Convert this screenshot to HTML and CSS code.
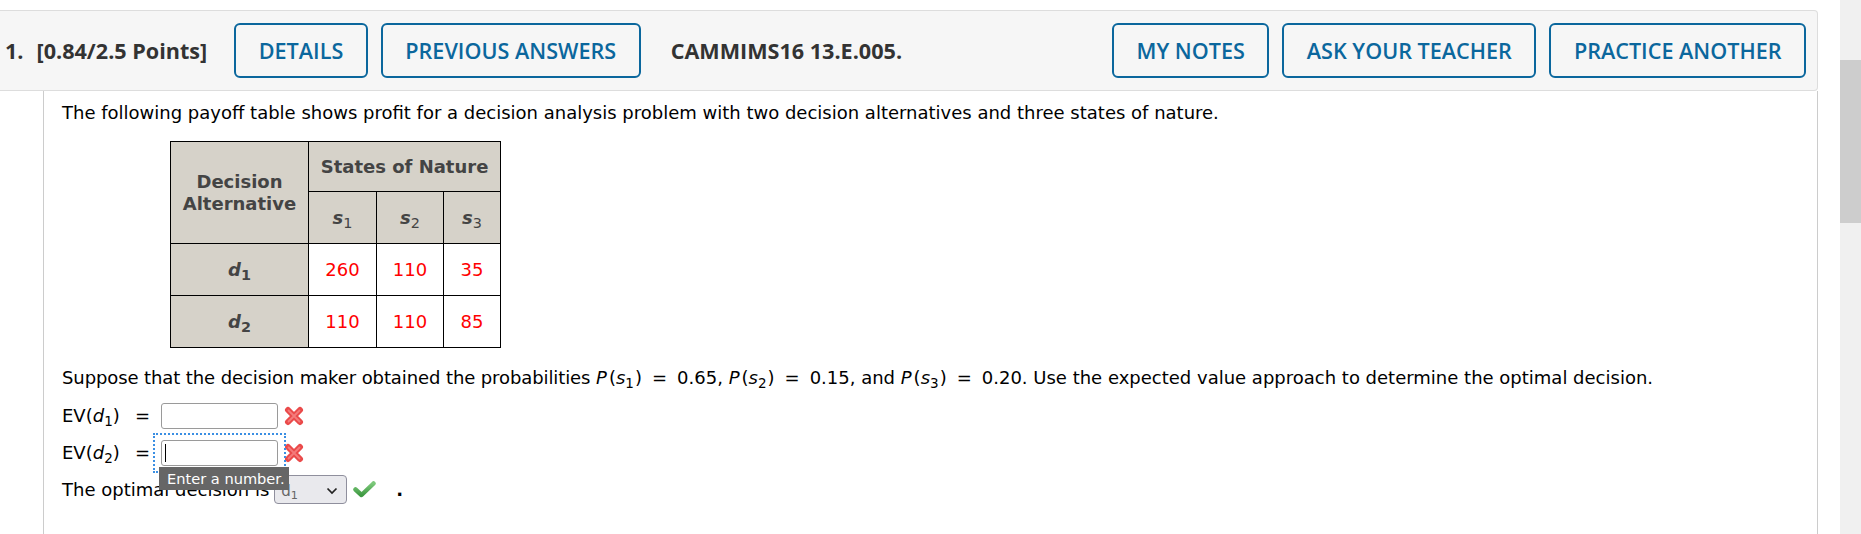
FILE: index.html
```html
<!DOCTYPE html>
<html>
<head>
<meta charset="utf-8">
<link rel="stylesheet" href="styles.css">
</head>
<body>
<div class="app">
  <div class="page">
    <div class="qhead">
      <span class="qnum">1.</span>
      <span class="qpts">[0.84/2.5 Points]</span>
      <button class="btn btn-details">DETAILS</button>
      <button class="btn">PREVIOUS ANSWERS</button>
      <span class="qcode">CAMMIMS16 13.E.005.</span>
      <span class="spacer"></span>
      <button class="btn">MY NOTES</button>
      <button class="btn">ASK YOUR TEACHER</button>
      <button class="btn">PRACTICE ANOTHER</button>
    </div>
    <div class="qbody">
      <p class="intro">The following payoff table shows profit for a decision analysis problem with two decision alternatives and three states of nature.</p>
      <table class="payoff">
        <colgroup>
          <col class="c-alt"><col class="c-s1"><col class="c-s2"><col class="c-s3">
        </colgroup>
        <tr class="r-top">
          <th rowspan="2" class="th-alt">Decision<br>Alternative</th>
          <th colspan="3">States of Nature</th>
        </tr>
        <tr class="r-sub">
          <th><i>s</i><sub>1</sub></th>
          <th><i>s</i><sub>2</sub></th>
          <th><i>s</i><sub>3</sub></th>
        </tr>
        <tr class="r-data">
          <th><i>d</i><sub>1</sub></th>
          <td>260</td><td>110</td><td>35</td>
        </tr>
        <tr class="r-data">
          <th><i>d</i><sub>2</sub></th>
          <td>110</td><td>110</td><td>85</td>
        </tr>
      </table>
      <p class="suppose"><span class="lead">Suppose that the decision maker obtained the probabilities</span> <span class="math"><i class="mp">P</i>(<i>s</i><sub>1</sub>)<span class="meq">=</span>0.65,</span> <span class="math"><i class="mp">P</i>(<i>s</i><sub>2</sub>)<span class="meq">=</span>0.15,</span> and <span class="math"><i class="mp">P</i>(<i>s</i><sub>3</sub>)<span class="meq">=</span>0.20.</span> Use the expected value approach to determine the optimal decision.</p>
      <div class="ev-row">
        <span class="ev-label">EV(<i>d</i><sub>1</sub>)</span>
        <span class="eq">=</span>
        <span class="ans"><span class="inp"></span></span>
        <svg class="xmark" width="20" height="20" viewBox="0 0 20 20"><path d="M4 4 L16 16 M16 4 L4 16" stroke="#ea4a4a" stroke-width="6" stroke-linecap="round"/><path d="M4.5 4.5 L15.5 15.5 M15.5 4.5 L4.5 15.5" stroke="#f47b7b" stroke-width="1.8" stroke-linecap="round"/></svg>
      </div>
      <div class="ev-row">
        <span class="ev-label">EV(<i>d</i><sub>2</sub>)</span>
        <span class="eq">=</span>
        <span class="ans focused"><span class="inp"><span class="caret"></span></span><span class="tip">Enter a number.</span></span>
        <svg class="xmark" width="20" height="20" viewBox="0 0 20 20"><path d="M4 4 L16 16 M16 4 L4 16" stroke="#ea4a4a" stroke-width="6" stroke-linecap="round"/><path d="M4.5 4.5 L15.5 15.5 M15.5 4.5 L4.5 15.5" stroke="#f47b7b" stroke-width="1.8" stroke-linecap="round"/></svg>
      </div>
      <div class="ev-row opt-row">
        <span>The optimal decision is</span>
        <span class="sel"><span class="sel-val">d<sub>1</sub></span><svg class="chev" width="12" height="8" viewBox="0 0 12 8"><path d="M1.5 1.5 L6 6 L10.5 1.5" fill="none" stroke="#222" stroke-width="1.7"/></svg></span>
        <svg class="check" width="23" height="17" viewBox="0 0 23 17"><defs><linearGradient id="g" x1="0" y1="0" x2="0" y2="1"><stop offset="0" stop-color="#7cc87a"/><stop offset="1" stop-color="#3f9a43"/></linearGradient></defs><path d="M2.5 8.5 L8.5 14 L20.5 2.5" fill="none" stroke="url(#g)" stroke-width="4.5" stroke-linecap="round" stroke-linejoin="round"/></svg>
        <span class="dot">.</span>
      </div>
    </div>
  </div>
  <div class="scrollbar"><div class="thumb"></div></div>
</div>
</body>
</html>
```
FILE: styles.css
```css
html, body {
  margin: 0;
  padding: 0;
  background: #fff;
  height: 100%;
  overflow: hidden;
}
.app {
  display: flex;
  height: 534px;
}
.page {
  width: 1818px;
  margin-right: 22px;
  padding-top: 10px;
  display: flex;
  flex-direction: column;
}
.scrollbar {
  width: 21px;
  background: #f0f0f0;
}
.thumb {
  margin-top: 60px;
  height: 163px;
  background: #cdcdcd;
}
.qhead {
  display: flex;
  align-items: center;
  height: 79px;
  background: #f6f6f6;
  border: 1px solid #dddddd;
  border-left: none;
  border-radius: 0 4px 4px 0;
  font-family: "Open Sans", "Liberation Sans", sans-serif;
  font-size: 21.6px;
  font-weight: 700;
  color: #333;
  padding-right: 11px;
}
.qnum {
  margin-left: 5px;
}
.qpts {
  margin-left: 13px;
  margin-right: 27px;
}
.btn {
  height: 55px;
  margin: 0 13px 0 0;
  padding: 0 22.5px;
  background: transparent;
  border: 2px solid #0b679d;
  border-radius: 6px;
  color: #0b679d;
  font-family: inherit;
  font-size: 21.6px;
  font-weight: 600;
}
.qhead .btn:last-child {
  margin-right: 0;
}
.qcode {
  margin-left: 17px;
}
.spacer {
  flex: 1;
}
.qbody {
  flex: 1;
  margin-left: 43px;
  border-left: 1px solid #cccccc;
  border-right: 1px solid #cccccc;
  padding: 12px 0 0 18px;
  font-family: "DejaVu Sans", Verdana, sans-serif;
  font-size: 18px;
  line-height: 20px;
  color: #000;
}
.qbody p {
  margin: 0;
}
sub {
  font-size: 75%;
  line-height: 0;
  vertical-align: -0.3em;
}
.lead {
  letter-spacing: -0.1px;
}
.math sub {
  padding-right: 1px;
}
.mp {
  padding-right: 2px;
}
.meq {
  margin: 0 10px;
}
.payoff {
  margin: 18px 0 0 108px;
  border-collapse: collapse;
  table-layout: fixed;
  width: 330px;
  font-size: 18px;
}
.c-alt { width: 138px; }
.c-s1 { width: 68px; }
.c-s2 { width: 67px; }
.c-s3 { width: 57px; }
.payoff th, .payoff td {
  border: 1px solid #000;
  text-align: center;
  vertical-align: middle;
  padding: 0;
}
.payoff th {
  background: #d6d2c9;
  color: #444;
  font-weight: bold;
  line-height: 22px;
}
.payoff th sub {
  font-weight: normal;
  font-size: 80%;
}
.payoff .r-data th sub {
  font-weight: bold;
}
.payoff td {
  color: #ff0000;
  background: #fff;
}
.r-top { height: 50px; }
.r-sub { height: 52px; }
.r-data { height: 52px; }
.suppose {
  margin-top: 20px !important;
}
.ev-row {
  display: flex;
  align-items: center;
  height: 37px;
}
.suppose + .ev-row {
  margin-top: 9px;
}
.ev-label {
  width: 73px;
}
.eq {
  width: 15px;
}
.ans {
  position: relative;
  display: inline-flex;
  padding: 7px 8px;
  margin-left: 3px;
}
.ans.focused {
  outline: 2px dotted #3b8fe3;
  outline-offset: -2px;
}
.inp {
  display: block;
  width: 115px;
  height: 24px;
  border: 1px solid #9a9a9a;
  border-radius: 3px;
  background: #fff;
  position: relative;
}
.caret {
  position: absolute;
  left: 3px;
  top: 3px;
  width: 1px;
  height: 18px;
  background: #000;
}
.tip {
  position: absolute;
  left: 6px;
  top: 34px;
  width: 130px;
  height: 23px;
  box-sizing: border-box;
  padding-left: 8px;
  background: #666;
  color: #fff;
  font-size: 14.6px;
  line-height: 23px;
  white-space: nowrap;
  z-index: 5;
}
.xmark {
  margin-left: -2px;
}
.opt-row .sel {
  display: inline-flex;
  align-items: center;
  justify-content: space-between;
  box-sizing: border-box;
  width: 73px;
  height: 29px;
  margin-left: 5px;
  padding: 2px 8px 0 6px;
  background: #e9e9ed;
  border: 1px solid #8f8f9d;
  border-radius: 4px;
  color: #666;
  font-size: 15px;
}
.check {
  margin-left: 6px;
}
.dot {
  margin-left: 20px;
  font-weight: bold;
}
```
